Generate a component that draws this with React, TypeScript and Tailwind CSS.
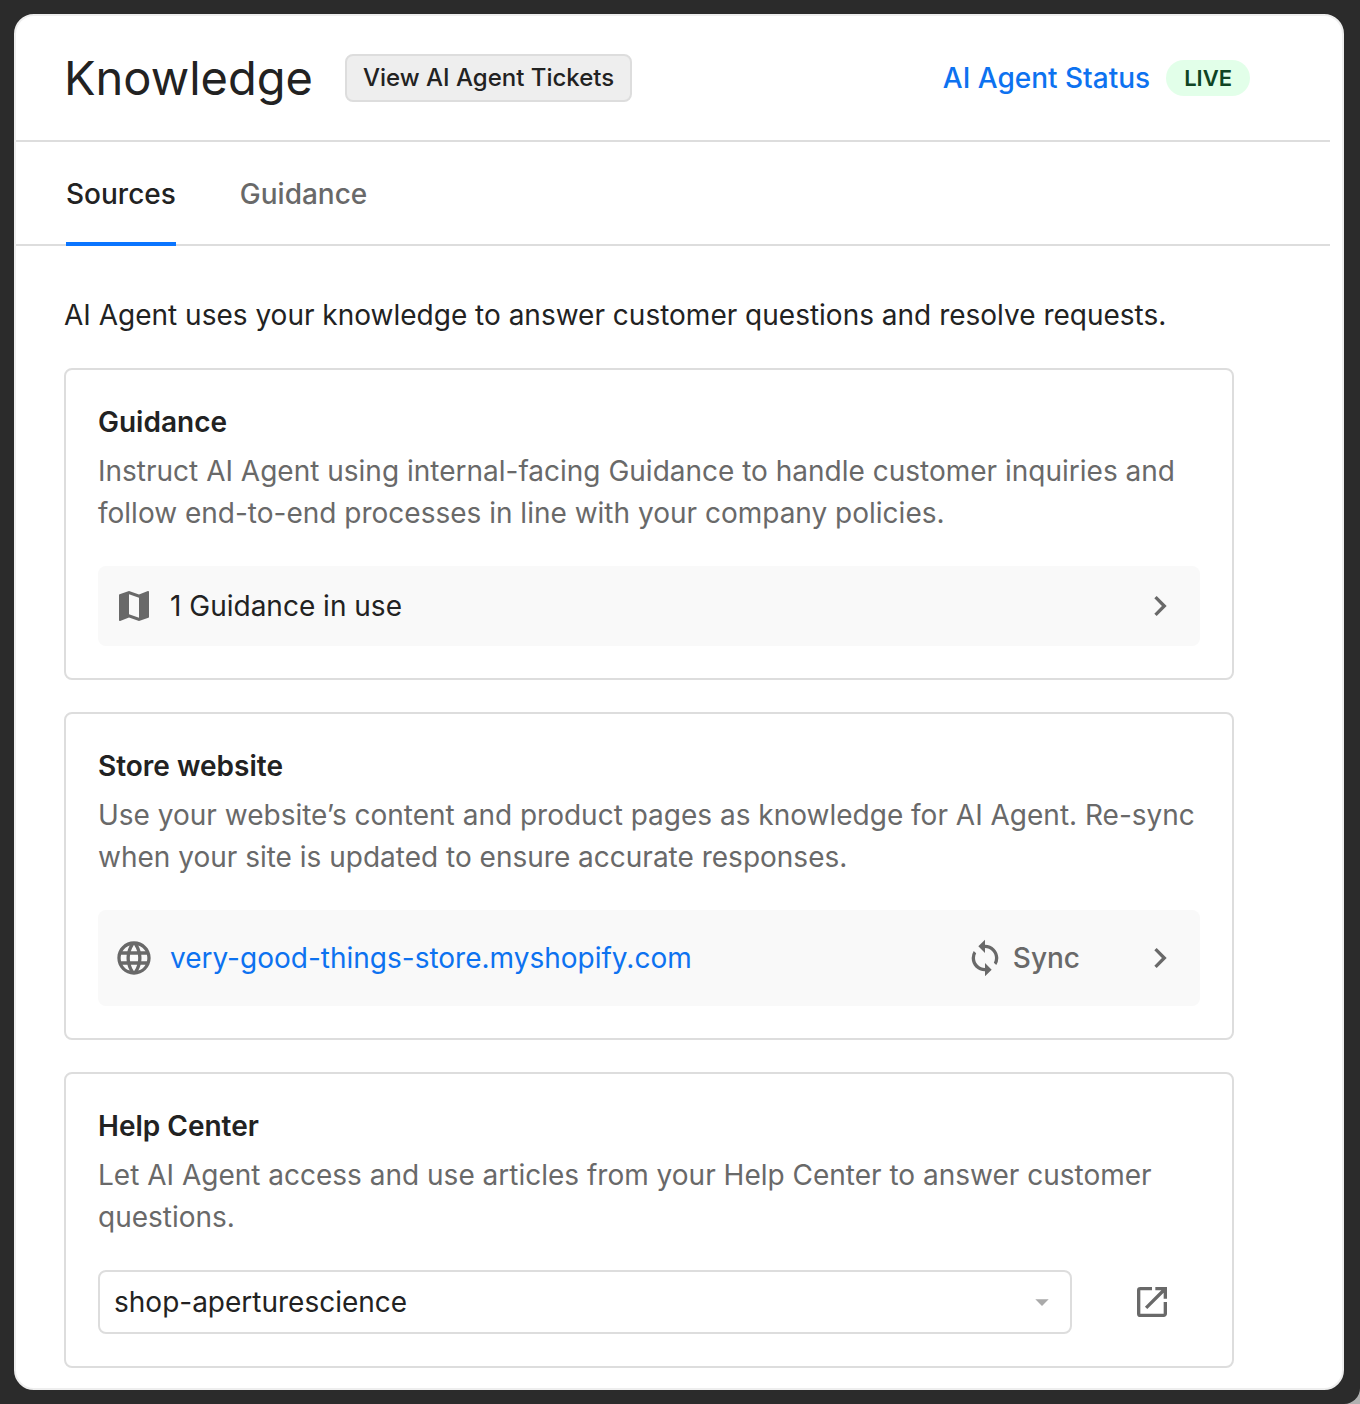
import React from 'react';
import { MdMap, MdChevronRight, MdLanguage, MdSync, MdOpenInNew, MdArrowDropDown } from 'react-icons/md';

interface SourceCardProps {
  title: string;
  description: string;
  children: React.ReactNode;
}

const SourceCard: React.FC<SourceCardProps> = ({ title, description, children }) => {
  return (
    <section className="rounded-lg border-2 border-[#dddddd] p-8">
      <h2 className="text-[28px] leading-10 font-semibold">{title}</h2>
      <p className="mt-2 text-[28px] leading-[42px] text-[#696969]">{description}</p>
      <div className="mt-8">{children}</div>
    </section>
  );
};

export default function App() {
  return (
    <div className="bg-[#b0b0b0]">
      <div className="min-h-screen rounded-br-2xl bg-[#2b2b2b] p-3.5 pr-4 font-['Inter',sans-serif] text-[#222222]">
        <main className="rounded-[20px] border-2 border-[#eeeeee] bg-white pb-5">
          <header className="mr-3 flex items-center border-b-2 border-[#dddddd] pt-9 pr-20 pb-9 pl-12">
            <h1 className="text-[47px] leading-[52px]">Knowledge</h1>
            <button className="ml-8 h-12 rounded-lg border-2 border-[#dddddd] bg-[#eeeeee] px-4 text-2xl font-medium">
              View AI Agent Tickets
            </button>
            <a href="#status" className="ml-auto text-[28px] font-medium text-[#0d72f0]">
              AI Agent Status
            </a>
            <span className="ml-4 rounded-full bg-[#e2ffe9] px-[18px] text-[22px] leading-9 font-semibold text-[#0f4423]">
              LIVE
            </span>
          </header>

          <nav className="mr-3 flex gap-16 border-b-2 border-[#dddddd] pl-[50px] text-[28px] leading-10 font-medium">
            <a href="#sources" className="-mb-0.5 border-b-4 border-[#0a75ff] pt-8 pb-7">
              Sources
            </a>
            <a href="#guidance" className="pt-8 pb-7 text-[#696969]">
              Guidance
            </a>
          </nav>

          <div className="pr-[108px] pl-12">
            <p className="pt-12 pb-8 text-[28px] leading-[42px]">
              AI Agent uses your knowledge to answer customer questions and resolve requests.
            </p>

            <div className="flex flex-col gap-8">
              <SourceCard
                title="Guidance"
                description="Instruct AI Agent using internal-facing Guidance to handle customer inquiries and follow end-to-end processes in line with your company policies."
              >
                <a href="#guidance" className="flex h-20 items-center rounded-lg bg-[#f9f9f9] px-4 text-[28px]">
                  <MdMap className="mr-4 size-10 text-[#696969]" />
                  1 Guidance in use
                  <MdChevronRight className="mr-1 ml-auto size-10 text-[#696969]" />
                </a>
              </SourceCard>

              <SourceCard
                title="Store website"
                description="Use your website’s content and product pages as knowledge for AI Agent. Re-sync when your site is updated to ensure accurate responses."
              >
                <div className="flex h-24 items-center rounded-lg bg-[#f9f9f9] px-4 text-[28px]">
                  <MdLanguage className="mr-4 size-10 text-[#696969]" />
                  <a href="#store" className="text-[#0d72f0]">
                    very-good-things-store.myshopify.com
                  </a>
                  <button className="ml-auto flex items-center gap-2 font-medium text-[#696969]">
                    <MdSync className="size-10" />
                    Sync
                  </button>
                  <button aria-label="Open store website" className="mr-1 ml-[60px] text-[#696969]">
                    <MdChevronRight className="size-10" />
                  </button>
                </div>
              </SourceCard>

              <SourceCard
                title="Help Center"
                description="Let AI Agent access and use articles from your Help Center to answer customer questions."
              >
                <div className="flex items-center">
                  <div className="relative flex-1">
                    <select
                      aria-label="Help Center"
                      className="h-16 w-full appearance-none rounded-lg border-2 border-[#dddddd] bg-white px-3.5 text-[28px]"
                    >
                      <option>shop-aperturescience</option>
                    </select>
                    <MdArrowDropDown className="pointer-events-none absolute top-4 right-3.5 size-8 text-[#aaaaaa]" />
                  </div>
                  <a href="#help-center" aria-label="Open Help Center" className="mr-7 ml-[60px] text-[#696969]">
                    <MdOpenInNew className="size-10" />
                  </a>
                </div>
              </SourceCard>
            </div>
          </div>
        </main>
      </div>
    </div>
  );
}
